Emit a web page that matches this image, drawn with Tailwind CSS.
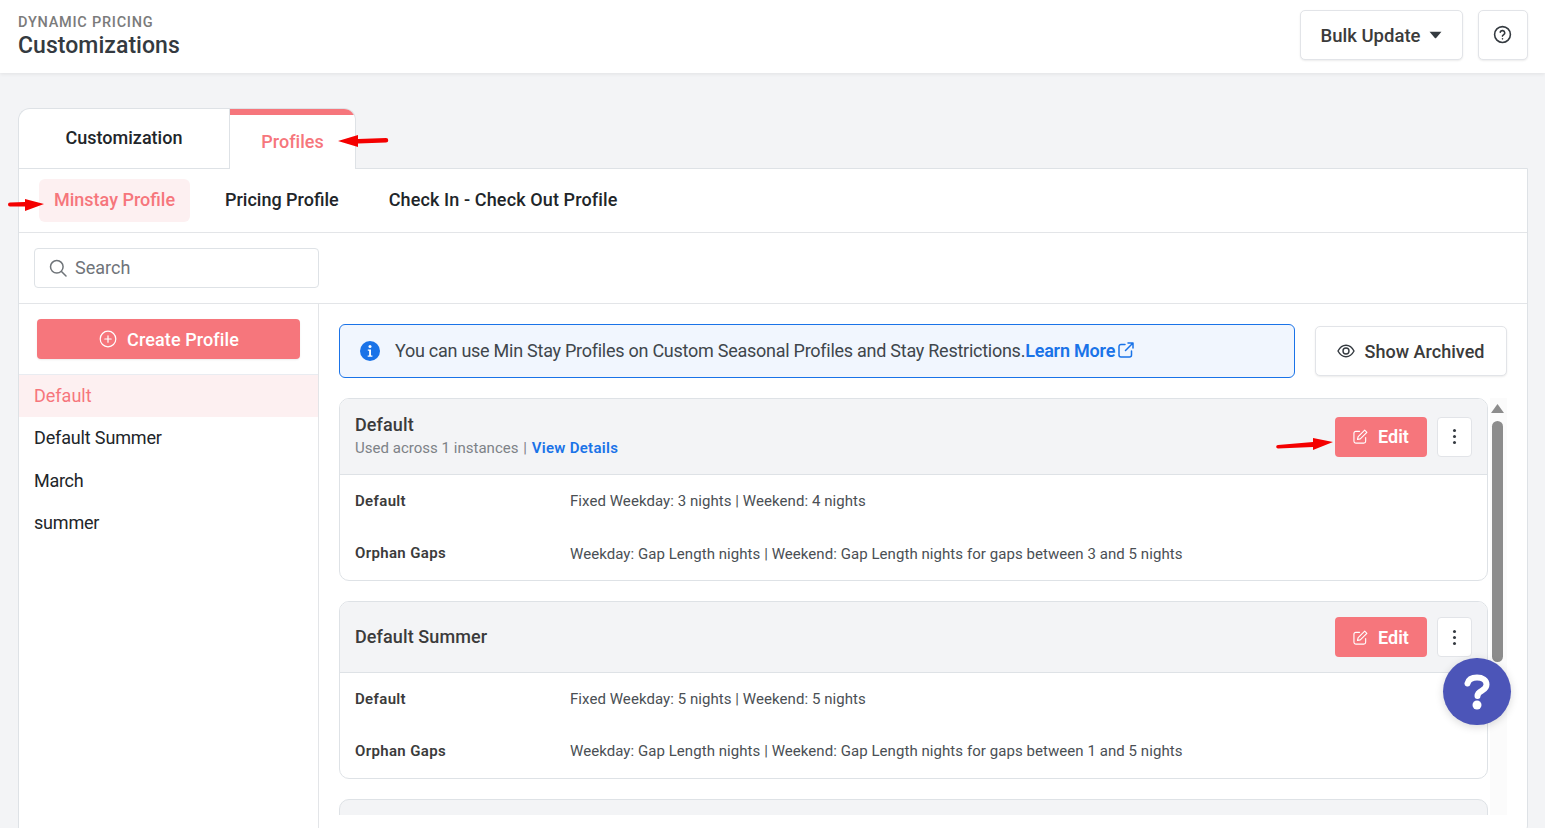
<!DOCTYPE html>
<html>
<head>
<meta charset="utf-8">
<script src="https://cdn.jsdelivr.net/npm/@tailwindcss/browser@4"></script>
</head>
<body class="m-0">
<div class="relative w-[1545px] h-[828px] overflow-hidden bg-[#f3f4f6] font-['Roboto',sans-serif] text-[#212529]">
  <header class="h-[73px] bg-white flex items-center justify-between pl-[18px] pr-[17px] shadow-[0_1px_4px_rgba(0,0,0,0.08)]">
    <div class="pt-[3px]">
      <div class="text-[14.5px] leading-[15px] font-medium text-[#7b7b7b] tracking-[0.75px]">DYNAMIC PRICING</div>
      <div class="text-[23px] leading-[32px] font-medium text-[#343a40] tracking-[0.05px]">Customizations</div>
    </div>
    <div class="flex items-center gap-[15px] -mt-[3px]">
      <button class="w-[163px] h-[50px] bg-white border border-[#e2e4e8] rounded-[5px] shadow-[0_1px_2px_rgba(0,0,0,0.08)] flex items-center justify-center gap-[9px] text-[18.5px] font-medium text-[#3b3b3b]"><span class="pt-[3px]">Bulk Update</span>
        <svg width="13" height="8" viewBox="0 0 12 7"><path d="M0.5 0.5h11L6.6 6.2a.8.8 0 0 1-1.2 0z" fill="#343a40"/></svg>
      </button>
      <button class="w-[50px] h-[50px] bg-white border border-[#e2e4e8] rounded-[5px] shadow-[0_1px_2px_rgba(0,0,0,0.08)] flex items-center justify-center">
        <svg class="-mt-[2px] -ml-[2px]" width="19" height="19" viewBox="0 0 24 24" fill="none" stroke="#343a40" stroke-width="2" stroke-linecap="round"><circle cx="12" cy="12" r="10"/><path d="M9.1 9a3 3 0 0 1 5.8 1c0 2-3 2.6-3 4"/><path d="M12 17.5h.01"/></svg>
      </button>
    </div>
  </header>

  <main class="pt-[35px] pl-[18px] pr-[17px]">
    <div class="flex w-[338px] h-[61px] relative z-10">
      <div class="w-[211px] h-[61px] bg-white border border-r-0 border-[#dee2e6] rounded-tl-[12px] flex items-center justify-center pb-[3px] text-[18px] font-medium text-[#212529]">Customization</div>
      <div class="w-[127px] h-[61px] bg-white border-x border-t border-[#dee2e6] rounded-tr-[12px] overflow-hidden flex flex-col">
        <div class="h-[6px] bg-[#f6767c] shrink-0"></div>
        <div class="flex-1 flex items-center justify-center text-[18px] font-medium text-[#f6767c] tracking-[0.05px] pb-[1px]">Profiles</div>
      </div>
    </div>
    <div class="-mt-px w-[1510px] h-[670px] bg-white border border-[#dee2e6] rounded-br-[12px]">
      <div class="h-[64px] flex items-center gap-[35px] pl-[20px] border-b border-[#e3e5e8]">
        <div class="h-[43px] w-[151px] rounded-[6px] bg-[#fdf0f1] flex items-center justify-center text-[18px] font-medium text-[#f6767c] pb-[3px]">Minstay Profile</div>
        <div class="text-[18px] font-medium text-[#212529] -mt-[2px]">Pricing Profile</div>
        <div class="text-[18px] font-medium text-[#212529] ml-[15px] -mt-[2px] tracking-[0.12px]">Check In - Check Out Profile</div>
      </div>
      <div class="h-[71px] flex items-center pl-[15px] border-b border-[#e3e5e8]">
        <div class="w-[285px] h-[40px] border border-[#dee2e6] rounded-[4px] flex items-center gap-[8px] pl-[14px] text-[18px] text-[#6f7479]">
          <svg width="18" height="18" viewBox="0 0 18 18" fill="none" stroke="#6f7479" stroke-width="1.5" stroke-linecap="round"><circle cx="7.8" cy="7.8" r="6.3"/><path d="M12.5 12.5l4.5 4.5"/></svg>
          <span class="-mt-[2px]">Search</span>
        </div>
      </div>
      <div class="flex h-[524px]">
        <aside class="w-[300px] shrink-0 border-r border-[#e3e5e8]">
          <div class="h-[71px] pt-[15px] pl-[18px] border-b border-[#e9ecf1]">
            <button class="w-[263px] h-[40px] bg-[#f6767c] rounded-[4px] flex items-center justify-center gap-[10px] pl-[1px] text-white text-[18px] font-medium shadow-[0_1px_2px_rgba(0,0,0,0.08)]">
              <svg width="18" height="18" viewBox="0 0 18 18" fill="none" stroke="#fff" stroke-width="1.2" stroke-linecap="round"><circle cx="9" cy="9" r="7.8"/><path d="M9 5.8v6.4M5.800 9h6.400"/></svg>
              <span class="tracking-[0.1px]">Create Profile</span>
            </button>
          </div>
          <div class="h-[42px] bg-[#fdf0f1] flex items-center pl-[15px] pb-[2px] text-[18px] text-[#f6767c]">Default</div>
          <div class="h-[43px] flex items-center pl-[15px] pb-[2px] text-[18px] tracking-[-0.15px] text-[#212529]">Default Summer</div>
          <div class="h-[43px] flex items-center pl-[15px] pb-[2px] text-[18px] tracking-[-0.3px] text-[#212529]">March</div>
          <div class="h-[42px] flex items-center pl-[15px] pb-[4px] text-[18px] tracking-[-0.2px] text-[#212529]">summer</div>
        </aside>
        <section class="flex-1 pl-[20px] pt-[20px] min-w-0">
          <div class="flex items-center gap-[20px] w-[1168px]">
            <div class="w-[956px] h-[54px] bg-[#f1f6fe] border border-[#1a73e8] rounded-[6px] flex items-center pl-[20px] text-[18px] text-[#40464c]">
              <svg class="mr-[15px] shrink-0" width="20" height="20" viewBox="0 0 20 20"><circle cx="10" cy="10" r="10" fill="#1a73e8"/><circle cx="10" cy="5.6" r="1.5" fill="#fff"/><path d="M7.8 8.4h3.2v6h1.4v1.4H7.7v-1.4h1.4V9.8H7.8z" fill="#fff"/></svg>
              <span class="tracking-[-0.26px] -mt-[2px]">You can use Min Stay Profiles on Custom Seasonal Profiles and Stay Restrictions.</span><span class="text-[#1a73e8] font-semibold tracking-[-0.2px] -mt-[2px]">Learn More</span>
              <svg class="ml-[3px] -mt-[3px]" width="16" height="16" viewBox="0 0 16 16" fill="none" stroke="#1a73e8" stroke-width="1.5" stroke-linecap="round" stroke-linejoin="round"><path d="M7 2.500H3a2 2 0 0 0-2 2V13a2 2 0 0 0 2 2h8.500a2 2 0 0 0 2-2V9"/><path d="M10 1h5v5M15 1L7.500 8.500"/></svg>
            </div>
            <button class="w-[192px] h-[50px] bg-white border border-[#e2e4e8] rounded-[5px] shadow-[0_1px_2px_rgba(0,0,0,0.08)] flex items-center justify-center gap-[10px] text-[18px] font-medium text-[#3b3b3b]">
              <svg class="-ml-[1px]" width="18" height="14" viewBox="0 0 18 14" fill="none" stroke="#343a40" stroke-width="1.4"><path d="M1 7c2-3.800 4.800-5.700 8-5.700S15 3.200 17 7c-2 3.800-4.800 5.700-8 5.700S3 10.800 1 7z"/><circle cx="9" cy="7" r="3"/></svg>
              <span class="tracking-[0.02px]">Show Archived</span>
            </button>
          </div>
          <div class="relative mt-[20px] w-[1168px] h-[417px] overflow-hidden">
            <div class="w-[1149px] flex flex-col gap-[20px]">
              <article class="h-[183px] border border-[#dee2e6] rounded-[10px] overflow-hidden">
                <div class="h-[76px] bg-[#f3f4f6] border-b border-[#dee2e6] flex items-center justify-between pl-[15px] pr-[15px]">
                  <div class="-mt-[2px]">
                    <div class="text-[18px] leading-[24px] font-medium tracking-[0.1px] text-[#3b3b3b]">Default</div>
                    <div class="text-[15px] leading-[20px] tracking-[0.02px] text-[#7d8287] mt-[1px]">Used across 1 instances <span class="mx-[1px]">|</span> <span class="text-[#1a73e8] font-semibold tracking-[0.3px]">View Details</span></div>
                  </div>
                  <div class="flex items-center gap-[10px]">
                    <button class="w-[92px] h-[40px] bg-[#f6767c] rounded-[4px] flex items-center justify-center gap-[10px] text-white text-[18px] font-semibold">
                      <svg width="15" height="15" viewBox="0 0 16 16" fill="none" stroke="#fff" stroke-width="1.2" stroke-linecap="round" stroke-linejoin="round"><path d="M7 2.500H3a2 2 0 0 0-2 2V13a2 2 0 0 0 2 2h8.500a2 2 0 0 0 2-2V9"/><path d="M12.500 1.200l2.300 2.300-7 7-3 .7.700-3z"/></svg>
                      Edit
                    </button>
                    <button class="w-[35px] h-[40px] bg-white border border-[#e2e4e8] rounded-[4px] flex flex-col items-center justify-center gap-[3px]">
                      <span class="w-[3px] h-[3px] rounded-full bg-[#343a40]"></span><span class="w-[3px] h-[3px] rounded-full bg-[#343a40]"></span><span class="w-[3px] h-[3px] rounded-full bg-[#343a40]"></span>
                    </button>
                  </div>
                </div>
                <div class="pl-[15px] pt-[16px] text-[15px] tracking-[0.06px] text-[#4a4f54]">
                  <div class="flex h-[20px] items-center"><div class="w-[215px] font-semibold tracking-[0.35px] text-[#3b3b3b]">Default</div><div>Fixed Weekday: 3 nights | Weekend: 4 nights</div></div>
                  <div class="flex h-[20px] items-center mt-[33px]"><div class="w-[215px] font-semibold tracking-[0.35px] text-[#3b3b3b] -mt-[2px]">Orphan Gaps</div><div>Weekday: Gap Length nights | Weekend: Gap Length nights for gaps between 3 and 5 nights</div></div>
                </div>
              </article>
              <article class="h-[178px] border border-[#dee2e6] rounded-[10px] overflow-hidden">
                <div class="h-[71px] bg-[#f3f4f6] border-b border-[#dee2e6] flex items-center justify-between pl-[15px] pr-[15px]">
                  <div class="text-[18px] font-medium tracking-[0.1px] text-[#3b3b3b] -mt-[2px]">Default Summer</div>
                  <div class="flex items-center gap-[10px]">
                    <button class="w-[92px] h-[40px] bg-[#f6767c] rounded-[4px] flex items-center justify-center gap-[10px] text-white text-[18px] font-semibold">
                      <svg width="15" height="15" viewBox="0 0 16 16" fill="none" stroke="#fff" stroke-width="1.2" stroke-linecap="round" stroke-linejoin="round"><path d="M7 2.500H3a2 2 0 0 0-2 2V13a2 2 0 0 0 2 2h8.500a2 2 0 0 0 2-2V9"/><path d="M12.500 1.200l2.300 2.300-7 7-3 .7.700-3z"/></svg>
                      Edit
                    </button>
                    <button class="w-[35px] h-[40px] bg-white border border-[#e2e4e8] rounded-[4px] flex flex-col items-center justify-center gap-[3px]">
                      <span class="w-[3px] h-[3px] rounded-full bg-[#343a40]"></span><span class="w-[3px] h-[3px] rounded-full bg-[#343a40]"></span><span class="w-[3px] h-[3px] rounded-full bg-[#343a40]"></span>
                    </button>
                  </div>
                </div>
                <div class="pl-[15px] pt-[16px] text-[15px] tracking-[0.06px] text-[#4a4f54]">
                  <div class="flex h-[20px] items-center"><div class="w-[215px] font-semibold tracking-[0.35px] text-[#3b3b3b]">Default</div><div>Fixed Weekday: 5 nights | Weekend: 5 nights</div></div>
                  <div class="flex h-[20px] items-center mt-[32px]"><div class="w-[215px] font-semibold tracking-[0.35px] text-[#3b3b3b]">Orphan Gaps</div><div>Weekday: Gap Length nights | Weekend: Gap Length nights for gaps between 1 and 5 nights</div></div>
                </div>
              </article>
              <article class="h-[60px] border border-[#dee2e6] rounded-t-[10px] bg-[#f3f4f6]"></article>
            </div>
            <div class="absolute right-0 top-0 bottom-0 w-[17px] bg-[#fbfbfb]">
              <svg class="absolute left-[1px] top-[6px]" width="13" height="9" viewBox="0 0 13 9"><path d="M6.500 0L13 9H0z" fill="#8c8c8c"/></svg>
              <div class="absolute left-[2px] top-[23px] w-[11px] h-[241px] rounded-full bg-[#8c8c8c]"></div>
            </div>
          </div>
        </section>
      </div>
    </div>
  </main>

  <div class="absolute left-[1443px] top-[658px] z-30 w-[68px] h-[67px] rounded-full bg-[#4c55b8] shadow-[0_2px_8px_rgba(0,0,0,0.15)] flex items-center justify-center">
    <svg width="26" height="36" viewBox="0 0 26 36" fill="none"><path d="M3.500 9.500C4.500 5.500 8 3.500 13 3.500c5.500 0 9.500 2.800 9.500 7 0 3.200-2 4.800-4.500 6.200-2.600 1.400-4.500 2.500-4.500 5.300" stroke="#fff" stroke-width="6" stroke-linecap="round"/><circle cx="13" cy="31" r="4.500" fill="#fff"/></svg>
  </div>

  <svg class="absolute left-0 top-0 z-20 pointer-events-none" width="1545" height="828" fill="#f40000">
    <path d="M338 141L358 135V139L386 138a2.200 2.200 0 0 1 0 4.500L358 143.500V147z"/>
    <path d="M44 204L25 199V202L10 202.500a2 2 0 0 0 0 4L25 206.500V211z"/>
    <path d="M1333 442L1313 438V442L1278 445a1.800 1.800 0 0 0 0 3.600L1313 447V450z"/>
  </svg>
</div>
</body>
</html>
